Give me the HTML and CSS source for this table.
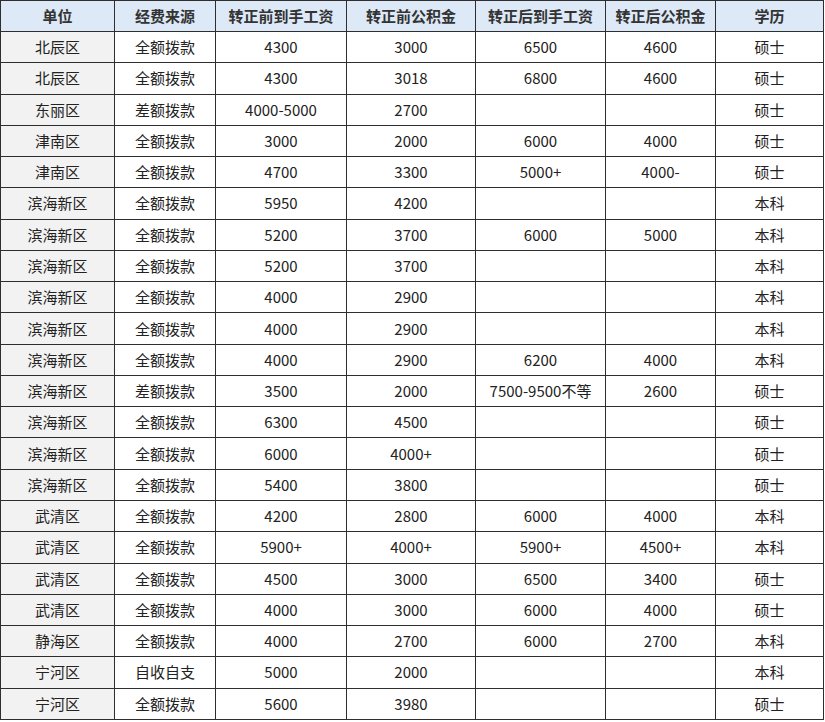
FILE: index.html
```html
<!DOCTYPE html>
<html lang="zh">
<head>
<meta charset="utf-8">
<link rel="stylesheet" href="styles.css">
</head>
<body>
<table class="grid">
<colgroup>
<col class="c1"><col class="c2"><col class="c3"><col class="c4"><col class="c5"><col class="c6"><col class="c7">
</colgroup>
<thead>
<tr><th>单位</th><th>经费来源</th><th>转正前到手工资</th><th>转正前公积金</th><th>转正后到手工资</th><th>转正后公积金</th><th>学历</th></tr>
</thead>
<tbody>
<tr><td>北辰区</td><td>全额拨款</td><td>4300</td><td>3000</td><td>6500</td><td>4600</td><td>硕士</td></tr>
<tr><td>北辰区</td><td>全额拨款</td><td>4300</td><td>3018</td><td>6800</td><td>4600</td><td>硕士</td></tr>
<tr><td>东丽区</td><td>差额拨款</td><td>4000-5000</td><td>2700</td><td></td><td></td><td>硕士</td></tr>
<tr><td>津南区</td><td>全额拨款</td><td>3000</td><td>2000</td><td>6000</td><td>4000</td><td>硕士</td></tr>
<tr><td>津南区</td><td>全额拨款</td><td>4700</td><td>3300</td><td>5000+</td><td>4000-</td><td>硕士</td></tr>
<tr><td>滨海新区</td><td>全额拨款</td><td>5950</td><td>4200</td><td></td><td></td><td>本科</td></tr>
<tr><td>滨海新区</td><td>全额拨款</td><td>5200</td><td>3700</td><td>6000</td><td>5000</td><td>本科</td></tr>
<tr><td>滨海新区</td><td>全额拨款</td><td>5200</td><td>3700</td><td></td><td></td><td>本科</td></tr>
<tr><td>滨海新区</td><td>全额拨款</td><td>4000</td><td>2900</td><td></td><td></td><td>本科</td></tr>
<tr><td>滨海新区</td><td>全额拨款</td><td>4000</td><td>2900</td><td></td><td></td><td>本科</td></tr>
<tr><td>滨海新区</td><td>全额拨款</td><td>4000</td><td>2900</td><td>6200</td><td>4000</td><td>本科</td></tr>
<tr><td>滨海新区</td><td>差额拨款</td><td>3500</td><td>2000</td><td>7500-9500不等</td><td>2600</td><td>硕士</td></tr>
<tr><td>滨海新区</td><td>全额拨款</td><td>6300</td><td>4500</td><td></td><td></td><td>硕士</td></tr>
<tr><td>滨海新区</td><td>全额拨款</td><td>6000</td><td>4000+</td><td></td><td></td><td>硕士</td></tr>
<tr><td>滨海新区</td><td>全额拨款</td><td>5400</td><td>3800</td><td></td><td></td><td>硕士</td></tr>
<tr><td>武清区</td><td>全额拨款</td><td>4200</td><td>2800</td><td>6000</td><td>4000</td><td>本科</td></tr>
<tr><td>武清区</td><td>全额拨款</td><td>5900+</td><td>4000+</td><td>5900+</td><td>4500+</td><td>本科</td></tr>
<tr><td>武清区</td><td>全额拨款</td><td>4500</td><td>3000</td><td>6500</td><td>3400</td><td>硕士</td></tr>
<tr><td>武清区</td><td>全额拨款</td><td>4000</td><td>3000</td><td>6000</td><td>4000</td><td>硕士</td></tr>
<tr><td>静海区</td><td>全额拨款</td><td>4000</td><td>2700</td><td>6000</td><td>2700</td><td>本科</td></tr>
<tr><td>宁河区</td><td>自收自支</td><td>5000</td><td>2000</td><td></td><td></td><td>本科</td></tr>
<tr><td>宁河区</td><td>全额拨款</td><td>5600</td><td>3980</td><td></td><td></td><td>硕士</td></tr>
</tbody>
</table>
</body>
</html>
```
FILE: styles.css
```css
html, body {
  margin: 0;
  padding: 0;
  background: #ffffff;
}
.grid {
  border-collapse: collapse;
  table-layout: fixed;
  width: 823px;
  font-family: "Noto Sans CJK SC", "Noto Sans", sans-serif;
  font-size: 15px;
  color: #222222;
}
.c1 { width: 114px; }
.c2 { width: 101px; }
.c3 { width: 131px; }
.c4 { width: 129px; }
.c5 { width: 130px; }
.c6 { width: 110px; }
.c7 { width: 108px; }
.grid th, .grid td {
  border: 1px solid #2e2e2e;
  padding: 0;
  text-align: center;
  vertical-align: middle;
  white-space: nowrap;
  line-height: 20px;
}
.grid th {
  height: 30px;
  background: #dde9f7;
  font-weight: bold;
  color: #333333;
}
.grid td {
  height: 30.27px;
}
.grid td:first-child {
  background: #f2f2f2;
}
```
